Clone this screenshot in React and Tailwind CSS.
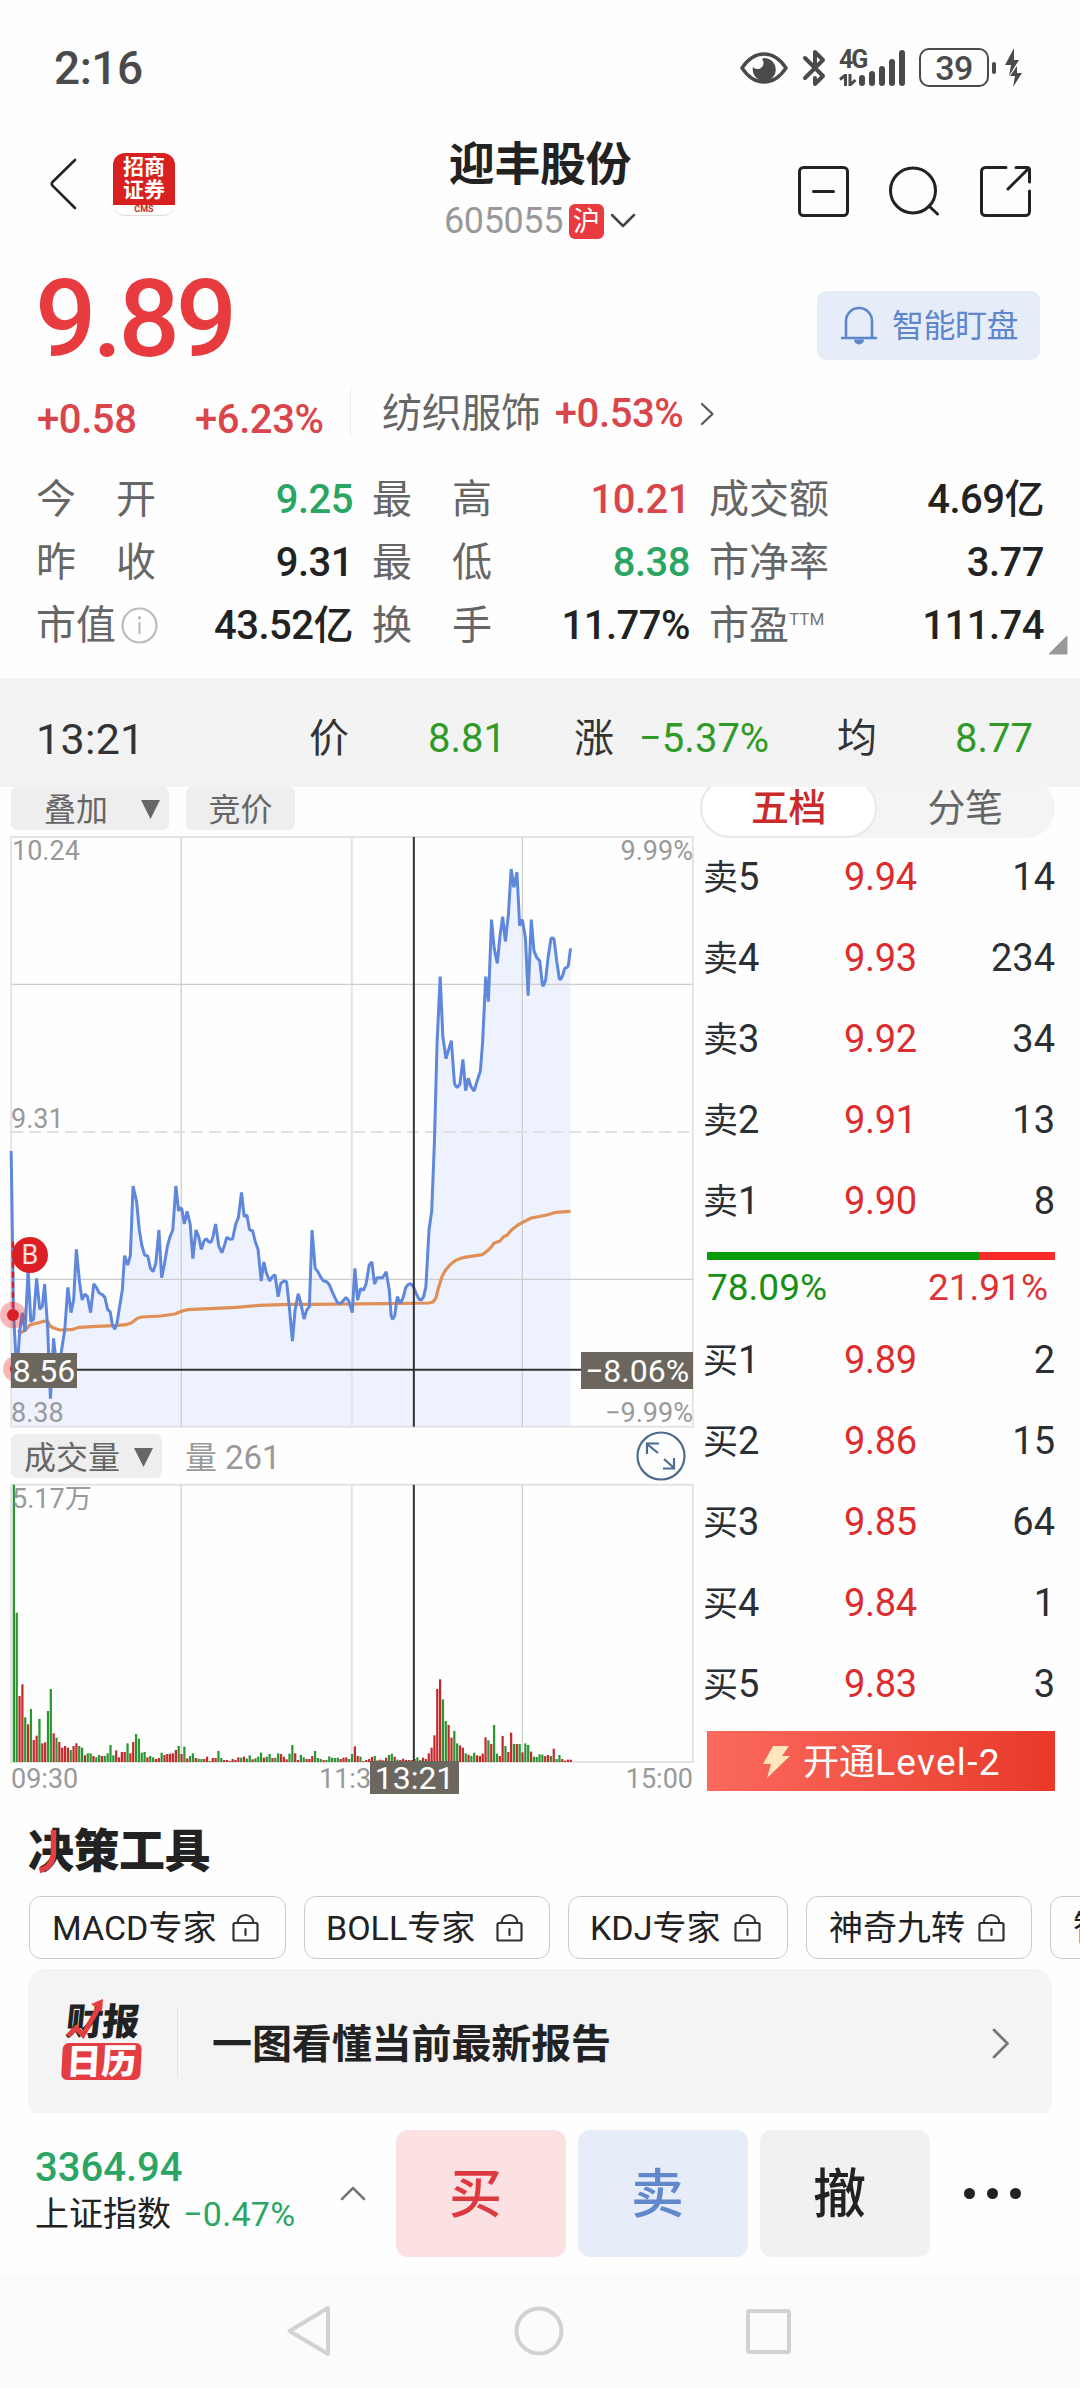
import React from "react";

const PRICE = [
  [25,123],[28,395],[30,600],[35,728],[38,740],[41,728],[44,665],[50,608],[56,665],[63,480],[69,635],[75,628],[82,505],[89,598],[95,588],[100,522],[107,660],[109,735],[113,866],[117,760],[120,685],[124,735],[130,760],[137,728],[145,660],[152,532],[159,608],[165,570],[171,418],[178,515],[184,570],[190,552],[196,560],[203,608],[210,522],[216,532],[222,549],[229,554],[235,562],[241,598],[247,606],[251,640],[257,658],[262,640],[267,598],[274,540],[279,437],[286,465],[292,437],[298,228],[306,275],[312,360],[318,408],[324,435],[331,438],[337,475],[343,485],[349,460],[356,360],[362,503],[368,465],[375,408],[381,380],[387,360],[394,228],[400,303],[402,294],[407,296],[413,342],[419,304],[426,342],[432,446],[439,360],[445,380],[451,418],[457,393],[462,386],[468,396],[473,396],[477,380],[483,342],[490,408],[497,428],[503,405],[508,382],[515,388],[521,387],[528,342],[534,323],[541,247],[547,320],[553,315],[559,359],[566,363],[572,396],[578,418],[585,513],[591,456],[597,490],[604,513],[610,500],[616,494],[623,560],[629,520],[636,513],[642,515],[648,590],[655,693],[661,600],[668,551],[674,580],[681,627],[687,600],[693,590],[699,360],[706,475],[712,485],[719,503],[725,513],[732,515],[738,525],[744,545],[751,565],[757,580],[763,580],[769,572],[775,562],[781,572],[789,608],[795,475],[801,570],[808,535],[814,541],[820,522],[827,465],[833,456],[839,522],[845,503],[857,503],[865,485],[872,540],[876,615],[879,628],[884,618],[890,560],[897,580],[903,563],[909,532],[915,523],[920,521],[926,530],[932,550],[939,568],[944,570],[949,560],[954,530],[961,360],[967,303],[973,100],[975,0],[979,-200],[986,-400],[992,-220],[999,-154],[1005,-182],[1011,-208],[1018,-80],[1021,-72],[1024,-67],[1030,-77],[1037,-152],[1043,-58],[1049,-95],[1055,-70],[1062,-57],[1068,-84],[1076,-117],[1081,-202],[1088,-400],[1094,-325],[1101,-571],[1107,-485],[1114,-440],[1120,-522],[1126,-580],[1132,-505],[1139,-590],[1145,-723],[1151,-668],[1158,-713],[1164,-553],[1170,-571],[1177,-515],[1183,-343],[1190,-571],[1196,-478],[1202,-458],[1209,-447],[1215,-375],[1217,-372],[1222,-388],[1228,-460],[1234,-513],[1237,-517],[1241,-513],[1247,-448],[1253,-393],[1256,-392],[1260,-402],[1265,-425],[1270,-428],[1273,-433],[1278,-485],
];

const AVERAGE = [
  [41,660],[45,669],[52,664],[60,655],[67,645],[75,642],[88,638],[97,634],[107,634],[112,648],[120,654],[134,660],[160,659],[178,652],[215,649],[260,647],[282,644],[295,638],[308,625],[318,621],[360,618],[392,612],[406,604],[420,599],[470,596],[530,592],[580,586],[650,583],[700,583],[860,581],[960,579],[970,576],[976,565],[983,530],[990,500],[998,480],[1010,462],[1022,450],[1040,442],[1080,434],[1092,422],[1100,412],[1106,400],[1120,393],[1128,380],[1136,376],[1145,361],[1160,345],[1175,334],[1190,324],[1225,315],[1245,307],[1278,304],
];

// One entry per minute; negative values are minutes that closed lower.
const VOLUME = [
  -832,-448,198,233,-134,113,-159,66,79,-129,56,59,-153,-219,86,-73,60,43,48,43,-36,48,56,-48,-43,20,-26,-26,18,-14,-21,18,-18,-26,-51,-20,35,14,30,30,-56,26,60,-84,-70,-28,-30,14,-18,-14,9,12,-28,21,24,25,26,36,-48,24,-46,11,-18,-26,12,-10,-9,9,16,-3,12,12,-33,-12,6,6,3,9,6,14,-13,16,-10,-20,8,-11,-16,-28,13,-16,-24,12,-13,-26,24,16,8,-25,-51,26,6,-21,-14,9,9,18,-33,-12,-9,6,-6,-17,-13,-12,-13,9,13,14,-9,-24,47,18,-16,3,6,9,15,-18,5,7,5,13,-21,-25,16,-7,6,10,6,6,6,9,-14,-6,13,9,26,43,80,219,248,-188,-123,111,73,-93,-56,50,43,-26,22,-18,-28,20,18,25,74,-65,54,-111,-25,18,78,-48,30,88,-54,54,-54,29,-56,-51,31,-16,-15,-23,-22,18,21,-18,40,-9,-21,9,4,7,7,
];

const toPath = (pts) => pts.map(([x, y], i) => `${i ? "L" : "M"}${x} ${y}`).join("");

function StatusBar() {
  return (
    <div className="flex h-[135px] items-center pl-[54px] text-[#4a4a4a]">
      <span className="w-[686px] text-[46px] leading-none font-medium tracking-[-0.5px]">2:16</span>
      <svg width="48" height="34" viewBox="0 0 48 34" fill="none">
        <path d="M2 17C8 8 16 3 24 3s16 5 22 14c-6 9-14 14-22 14S8 26 2 17z" stroke="#4a4a4a" strokeWidth="3.4" strokeLinejoin="round" />
        <path d="M24 7a11.500 11.500 0 1 1-11 9 6 6 0 1 0 9-8z" fill="#4a4a4a" />
      </svg>
      <svg className="ml-[14px]" width="24" height="38" viewBox="0 0 24 38" fill="none" stroke="#4a4a4a" strokeWidth="4" strokeLinejoin="round" strokeLinecap="round">
        <path d="M3 9l9 9M3 29l18-18-8-8v13M13 29v6l8-8-6-6" />
      </svg>
      <div className="ml-[13px] flex h-[38px] w-[67px] items-end">
        <div className="flex h-full w-[20px] flex-col">
          <span className="h-[25px] text-[25px] leading-[22px] font-bold tracking-[-2px]">4G</span>
          <svg width="18" height="12" viewBox="0 0 18 12" fill="none" stroke="#4a4a4a" strokeWidth="3">
            <path d="M6.500 12V1L1 5.500M11 0v11l5.500-5" />
          </svg>
        </div>
        <div className="flex items-end gap-[4px] pb-[1px]">
          <i className="h-[11px] w-[6px] rounded-full bg-[#4a4a4a]" />
          <i className="h-[15px] w-[6px] rounded-full bg-[#4a4a4a]" />
          <i className="h-[20px] w-[6px] rounded-full bg-[#4a4a4a]" />
          <i className="h-[27px] w-[6px] rounded-full bg-[#4a4a4a]" />
          <i className="h-[36px] w-[6px] rounded-full bg-[#4a4a4a]" />
        </div>
      </div>
      <div className="ml-[13px] flex h-[39px] w-[70px] shrink-0 items-center justify-center rounded-[10px] border-[2.500px] border-[#4a4a4a] text-[34px] leading-none font-medium tracking-[-0.5px]">39</div>
      <i className="ml-[3px] h-[12px] w-[4px] rounded-full bg-[#4a4a4a]" />
      <svg className="ml-[9px]" width="17" height="39" viewBox="0 0 17 39" fill="#4a4a4a">
        <path d="M9 0v12h5L4 28l2-11H0zM12 18v7h5l-9 14 2-11H5z" />
      </svg>
    </div>
  );
}

function Header() {
  return (
    <div className="flex h-[110px] items-start">
      <svg className="mt-[23px] ml-[49px]" width="28" height="52" viewBox="0 0 28 52" fill="none" stroke="#222" strokeWidth="2.600" strokeLinecap="round" strokeLinejoin="round">
        <path d="M26 2L3.500 24q-1.500 1.800 0 3.600L26 50" />
      </svg>
      <div className="mt-[18px] ml-[36px] flex h-[63px] w-[62px] flex-col overflow-hidden rounded-[12px] border-b border-[#ddd] bg-white">
        <div className="flex h-[52px] shrink-0 flex-col items-center justify-center bg-[#d92020] text-[21px] leading-[23px] font-bold text-white">
          <span>招商</span>
          <span>证券</span>
        </div>
        <span className="text-center text-[9px] leading-[9px] font-bold text-[#c8282a]">CMS</span>
      </div>
      <div className="flex w-[730px] shrink-0 flex-col items-center">
        <h1 className="mt-[5px] text-[46px] leading-[48px] font-bold tracking-[-0.4px] text-[#222]">迎丰股份</h1>
        <div className="mt-[15px] flex h-[36px] items-center">
          <span className="text-[36px] leading-none tracking-[-0.4px] text-[#999]">605055</span>
          <span className="ml-[6px] flex h-[35px] w-[35px] items-center justify-center rounded-[6px] bg-[#e93b3f] pt-[2px] text-[27px] leading-none text-white">沪</span>
          <svg className="ml-[6px]" width="26" height="16" viewBox="0 0 26 16" fill="none" stroke="#444" strokeWidth="2.500" strokeLinecap="round" strokeLinejoin="round">
            <path d="M2 2l11 11L24 2" />
          </svg>
        </div>
      </div>
      <div className="mt-[30px] -ml-[108px] flex gap-[38px]">
        <svg width="53" height="53" viewBox="0 0 53 53" fill="none" stroke="#222" strokeWidth="3" strokeLinecap="round">
          <rect x="2.500" y="2.500" width="48" height="48" rx="4" />
          <path d="M16.500 26.500h20" />
        </svg>
        <svg width="53" height="53" viewBox="0 0 53 53" fill="none" stroke="#222" strokeWidth="3" strokeLinecap="round">
          <circle cx="25" cy="25.500" r="22.500" />
          <path d="M41 41l8.500 8" />
        </svg>
        <svg width="53" height="53" viewBox="0 0 53 53" fill="none" stroke="#222" strokeWidth="3" strokeLinecap="round" strokeLinejoin="round">
          <path d="M27 2.500H6.500a4 4 0 0 0-4 4v40a4 4 0 0 0 4 4h40a4 4 0 0 0 4-4V26M37 2.500h11q2.500 0 2.500 2.500v12M49 4L29 24" />
        </svg>
      </div>
    </div>
  );
}

function Quote() {
  return (
    <>
      <div className="flex h-[147px] items-center justify-between pr-[40px] pl-[35px]">
        <span className="text-[108px] leading-none font-medium tracking-[-4px] text-[#e83b3f]">9.89</span>
        <button className="mt-[14px] flex h-[69px] w-[223px] items-center rounded-[9px] bg-[#e6edf8] pl-[23px] text-[#5d86cc]">
          <svg width="38" height="39" viewBox="0 0 38 39" fill="none" stroke="#5d86cc" strokeWidth="2.600" strokeLinecap="round">
            <path d="M2 32h34M6 32V15a13 13 0 0 1 26 0v17" />
            <path d="M14 33.500a5 5 0 0 0 10 0z" fill="#5d86cc" stroke="none" />
          </svg>
          <span className="ml-[14px] text-[32px] leading-none tracking-[-0.5px]">智能盯盘</span>
        </button>
      </div>
      <div className="flex h-[52px] items-center text-[40px] leading-none font-medium tracking-[-0.4px] text-[#d9454a]">
        <span className="mt-[3px] ml-[37px] w-[158px]">+0.58</span>
        <span className="mt-[3px] w-[155px]">+6.23%</span>
        <i className="mb-[14px] h-[51px] w-px bg-[#eee]" />
        <span className="mb-[9px] ml-[31px] font-normal tracking-[-0.3px] text-[#666]">纺织服饰</span>
        <span className="mb-[9px] ml-[14px]">+0.53%</span>
        <svg className="mb-[9px] ml-[17px]" width="15" height="24" viewBox="0 0 15 24" fill="none" stroke="#555" strokeWidth="2.200" strokeLinecap="round" strokeLinejoin="round">
          <path d="M2 2l10.500 10L2 22" />
        </svg>
      </div>
    </>
  );
}

const STATS = [
  [["今　开", "9.25", "text-[#2aa564]"], ["最　高", "10.21", "text-[#d9454a]"], ["成交额", "4.69亿", "text-[#222]"]],
  [["昨　收", "9.31", "text-[#222]"], ["最　低", "8.38", "text-[#2aa564]"], ["市净率", "3.77", "text-[#222]"]],
  [["市值", "43.52亿", "text-[#222]"], ["换　手", "11.77%", "text-[#222]"], ["市盈", "111.74", "text-[#222]"]],
];

function Stats() {
  return (
    <div className="mt-[24px] flex h-[210px] items-start pl-[36px]">
      <div className="grid w-[1008px] shrink-0 grid-cols-[317px_318px_335px] gap-x-[19px] text-[40px] leading-none">
        {STATS.flat().map(([label, value, tone]) => (
          <div key={label} className="flex h-[63px] items-center">
            <span className="text-[#666]">{label}</span>
            {label === "市值" && (
              <svg className="ml-[5px]" width="37" height="37" viewBox="0 0 37 37" fill="none" stroke="#bbb" strokeWidth="2.200" strokeLinecap="round">
                <circle cx="18.500" cy="18.500" r="17" />
                <path d="M18.500 16v10" />
                <path d="M18.500 10.500v.5" strokeWidth="3" />
              </svg>
            )}
            {label === "市盈" && <span className="mb-[13px] text-[17px] text-[#777]">TTM</span>}
            <span className={"ml-auto font-medium tracking-[-0.5px] " + tone}>{value}</span>
          </div>
        ))}
      </div>
      <svg className="mt-[167px] ml-[4px]" width="20" height="20" viewBox="0 0 20 20" fill="#999">
        <path d="M19 1v18H1z" stroke="#999" strokeLinejoin="round" />
      </svg>
    </div>
  );
}

function CursorBar() {
  return (
    <div className="flex h-[109px] items-center bg-[#f3f3f3] pt-[13px] text-[40px] leading-none text-[#333]">
      <span className="ml-[36px] w-[273px] text-[43px] tracking-[0.3px]">13:21</span>
      <span className="w-[119px]">价</span>
      <span className="w-[146px] text-[#2f9a27]">8.81</span>
      <span className="w-[65px]">涨</span>
      <span className="w-[198px] text-[#2f9a27]">−5.37%</span>
      <span className="w-[118px]">均</span>
      <span className="text-[#2f9a27]">8.77</span>
    </div>
  );
}

function Down({ className }) {
  return (
    <svg className={className} width="19" height="19" viewBox="0 0 19 19" fill="#666">
      <path d="M0 0h19L9.500 19z" />
    </svg>
  );
}

function PriceChart() {
  return (
    <div className="relative h-[604px] w-[700px] text-[27px] leading-none text-[#999]">
      <svg className="block" width="700" height="604" viewBox="0 -840 1568 1812" preserveAspectRatio="none" fill="none">
        <path d={toPath(PRICE) + "L1278 950L25 950Z"} fill="#edf2fe" />
        <path d="M25 -819H1552V950H25ZM788 -819V950" stroke="#e4e4e4" strokeWidth="2" vectorEffect="non-scaling-stroke" />
        <path d="M406 -819V950M1170 -819V950M25 -377H1552M25 508H1552" stroke="#ccc" strokeWidth="1.200" vectorEffect="non-scaling-stroke" />
        <path d="M25 66H1552" stroke="#e0e0e0" strokeWidth="2" strokeDasharray="12 6" vectorEffect="non-scaling-stroke" />
        <path d={toPath(AVERAGE)} stroke="#e08f56" strokeWidth="3.200" strokeLinejoin="round" vectorEffect="non-scaling-stroke" />
        <path d={toPath(PRICE)} stroke="#5f87dc" strokeWidth="3" strokeLinejoin="bevel" vectorEffect="non-scaling-stroke" />
        <path d="M29 395V600" stroke="#dc1f24" strokeWidth="2.500" strokeDasharray="6 4" vectorEffect="non-scaling-stroke" />
        <ellipse cx="29" cy="615" rx="29" ry="40" fill="#e8343a" fillOpacity=".35" />
        <ellipse cx="29" cy="615" rx="13.500" ry="18" fill="#dc1f24" />
        <ellipse cx="33" cy="777" rx="26" ry="38" fill="#e8343a" fillOpacity=".35" />
        <ellipse cx="33" cy="777" rx="11" ry="16" fill="#dc1f24" />
        <path d="M927 -819V950M25 779H1552" stroke="#333" strokeWidth="2" vectorEffect="non-scaling-stroke" />
      </svg>
      <span className="absolute top-[8px] left-[12px]">10.24</span>
      <span className="absolute top-[8px] right-[7px]">9.99%</span>
      <span className="absolute top-[276px] left-[11px]">9.31</span>
      <span className="absolute top-[570px] left-[11px]">8.38</span>
      <span className="absolute top-[570px] right-[7px]">−9.99%</span>
      <span className="absolute top-[407px] left-[12px] flex size-[36px] items-center justify-center rounded-full bg-[#dc1f24] text-[27px] text-[#fbe3e3]">B</span>
      <span className="absolute top-[523px] left-[11px] flex h-[35px] w-[66px] items-center justify-center bg-[#6b675f] text-[32px] text-white">8.56</span>
      <span className="absolute top-[522px] left-[581px] flex h-[37px] w-[112px] items-center justify-center bg-[#6b675f] text-[32px] text-white">−8.06%</span>
    </div>
  );
}

function VolumeChart() {
  return (
    <div className="relative h-[292px] w-[700px] text-[27px] leading-none text-[#999]">
      <svg className="block" width="700" height="292" viewBox="0 84 1568 876" preserveAspectRatio="none" fill="none">
        <path d="M25 104H1552V936H25ZM788 104V936" stroke="#e4e4e4" strokeWidth="2" vectorEffect="non-scaling-stroke" />
        <path d="M406 104V936M1170 104V936" stroke="#ccc" strokeWidth="1.200" vectorEffect="non-scaling-stroke" />
        {VOLUME.map((v, i) => (
          <rect key={i} x={28.6 + i * 6.365} y={936 - Math.abs(v)} width="5" height={Math.abs(v)} fill={v > 0 ? "#c22a2c" : "#2a9632"} />
        ))}
        <path d="M927 104V936" stroke="#333" strokeWidth="2" vectorEffect="non-scaling-stroke" />
      </svg>
      <span className="absolute top-[8px] left-[12px]">5.17万</span>
      <span className="absolute top-[288px] left-[11px]">09:30</span>
      <span className="absolute top-[288px] left-[319px]">11:3</span>
      <span className="absolute top-[288px] right-[7px]">15:00</span>
      <span className="absolute top-[283px] left-[370px] flex h-[33px] w-[89px] items-center justify-center bg-[#6b675f] pt-px text-[32px] text-white">13:21</span>
    </div>
  );
}

function Charts() {
  return (
    <div className="w-[700px] shrink-0">
      <div className="flex h-[43px] pl-[11px] text-[32px] leading-none text-[#666]">
        <div className="flex w-[158px] items-center rounded-[6px] bg-[#eee] pt-[2px] pl-[33px]">
          叠加
          <Down className="mb-[1px] ml-[33px]" />
        </div>
        <div className="ml-[17px] flex w-[109px] items-center justify-center rounded-[6px] bg-[#eee] pt-[2px]">竞价</div>
      </div>
      <PriceChart />
      <div className="flex h-[44px] items-center pl-[11px] text-[32px] leading-none">
        <div className="flex h-full w-[151px] items-center rounded-[6px] bg-[#eee] pt-[3px] pl-[13px] text-[#666]">
          成交量
          <Down className="ml-[14px] -mt-[1px]" />
        </div>
        <span className="mt-[3px] ml-[23px] text-[#999]">量 <span className="text-[33px]">261</span></span>
        <svg className="ml-auto mr-[14px] -my-1 shrink-0" width="50" height="50" viewBox="0 0 50 50" fill="none" stroke="#4a6d8f" strokeWidth="2.200">
          <circle cx="25" cy="25" r="23.500" />
          <path d="M22 22L11 13M11 23V12.500h12M28 28l10 9M38 27v10.500H27" />
        </svg>
      </div>
      <VolumeChart />
    </div>
  );
}

const SELLS = [["卖5", "9.94", 14], ["卖4", "9.93", 234], ["卖3", "9.92", 34], ["卖2", "9.91", 13], ["卖1", "9.90", 8]];
const BUYS = [["买1", "9.89", 2], ["买2", "9.86", 15], ["买3", "9.85", 64], ["买4", "9.84", 1], ["买5", "9.83", 3]];

function Levels({ rows }) {
  return rows.map(([label, price, qty]) => (
    <div key={label} className="flex flex-1 items-center pt-[2px] pr-[25px] pl-[3px] text-[38px] leading-none text-[#2b2f33]">
      <span className="w-[141px]"><span className="text-[35px]">{label[0]}</span>{label[1]}</span>
      <span className="tracking-[-0.3px] text-[#dc2c2e]">{price}</span>
      <span className="ml-auto">{qty}</span>
    </div>
  ));
}

function OrderBook() {
  return (
    <div className="flex w-[380px] flex-col">
      <div className="h-[51px] w-[355px] shrink-0 overflow-hidden">
        <div className="-mt-[9px] flex h-[60px] rounded-full bg-[#f4f4f4] text-[38px] leading-none">
          <span className="flex w-[177px] items-center justify-center rounded-full border-2 border-[#e8e8e8] bg-white font-medium tracking-[-0.5px] text-[#c92a2a]">五档</span>
          <span className="flex flex-1 items-center justify-center pr-[2px] tracking-[-0.5px] text-[#666]">分笔</span>
        </div>
      </div>
      <div className="-mt-[2px] flex h-[404px] flex-col"><Levels rows={SELLS} /></div>
      <div className="mt-[12px] ml-[7px] flex h-[8px] w-[348px]">
        <i className="w-[78.090%] bg-[#089b08]" />
        <i className="flex-1 bg-[#fb2b2b]" />
      </div>
      <div className="flex h-[53px] items-center justify-between pt-[2px] pr-[32px] pl-[7px] text-[37px] leading-none">
        <span className="text-[#179017]">78.09%</span>
        <span className="text-[#dc3436]">21.91%</span>
      </div>
      <div className="mt-[6px] flex h-[404px] flex-col"><Levels rows={BUYS} /></div>
      <button className="mt-[8px] ml-[7px] flex h-[60px] w-[348px] items-center bg-gradient-to-r from-[#fb695d] to-[#e83828] pt-[2px] pl-[56px] text-[36px] leading-none text-white">
        <svg width="27" height="32" viewBox="0 0 27 32" fill="#ffe6be">
          <path d="M10 0h16l-7 10h8L4 32l4-14H0z" />
        </svg>
        <span className="ml-[13px] whitespace-nowrap">开通<span className="text-[37px] tracking-[1.3px]">Level-2</span></span>
      </button>
    </div>
  );
}

function Lock() {
  return (
    <svg width="27" height="29" viewBox="0 0 27 29" fill="none" stroke="#333" strokeWidth="2.200" strokeLinecap="round">
      <rect x="1.500" y="10" width="24" height="17.500" rx="1.500" />
      <path d="M5.500 10a8 8 0 0 1 16 0M13.500 16v6" />
    </svg>
  );
}

function Tools() {
  return (
    <>
      <div className="flex h-[86px] items-center pb-[5px] pl-[28px]">
        <h2 className="relative text-[46px] leading-none font-black tracking-[-0.5px] text-[#222]">
          决策工具
          <svg className="absolute top-0 left-[9px]" width="20" height="46" viewBox="0 0 20 46" fill="none" stroke="#e43d42" strokeWidth="5.500">
            <path d="M16.500 2v22q0 15-14 18.500" />
          </svg>
        </h2>
      </div>
      <div className="flex h-[63px] gap-[18px] overflow-hidden pl-[29px] text-[34px] leading-none text-[#222]">
        <div className="flex w-[257px] shrink-0 items-center justify-between rounded-[12px] border border-[#ccc] pr-[26px] pl-[22px]">MACD专家<Lock /></div>
        <div className="flex w-[246px] shrink-0 items-center justify-between rounded-[12px] border border-[#ccc] pr-[26px] pl-[21px]">BOLL专家<Lock /></div>
        <div className="flex w-[220px] shrink-0 items-center justify-between rounded-[12px] border border-[#ccc] pr-[26px] pl-[21px]">KDJ专家<Lock /></div>
        <div className="flex w-[226px] shrink-0 items-center justify-between rounded-[12px] border border-[#ccc] pr-[26px] pl-[22px]">神奇九转<Lock /></div>
        <div className="flex w-[226px] shrink-0 items-center justify-between rounded-[12px] border border-[#ccc] pr-[26px] pl-[22px]">智能选股<Lock /></div>
      </div>
      <div className="mx-[28px] mt-[10px] h-[144px] overflow-hidden">
        <div className="flex h-[150px] items-center rounded-[18px] bg-[#f4f4f4] pb-[2px] pl-[34px]">
          <div className="relative w-[81px] shrink-0 font-black">
            <div className="-skew-x-6 pl-[4px] text-[37px] leading-[34px] tracking-[-0.5px] text-[#222]">财报</div>
            <svg className="absolute -top-[7px] left-[4px]" width="40" height="40" viewBox="0 0 40 40" fill="none" stroke="#e43d42" strokeWidth="5">
              <path d="M2 37l8-8 7 7L33 8" />
              <path d="M25 5l12-5-1 13z" fill="#e43d42" stroke="none" />
            </svg>
            <div className="mt-[3px] flex h-[37px] w-[79px] -skew-x-3 items-center justify-center rounded-[6px] bg-[#e43d42] pt-[2px] text-[35px] leading-none text-white">日历</div>
          </div>
          <i className="ml-[34px] h-[69px] w-px bg-[#e2e2e2]" />
          <span className="mt-[4px] ml-[34px] text-[40px] leading-none font-bold tracking-[-0.1px] text-[#222]">一图看懂当前最新报告</span>
          <svg className="mr-[42px] ml-auto" width="18" height="31" viewBox="0 0 18 31" fill="none" stroke="#777" strokeWidth="2.800" strokeLinecap="round" strokeLinejoin="round">
            <path d="M2 2l13.500 13.500L2 29" />
          </svg>
        </div>
      </div>
    </>
  );
}

function TradeBar() {
  return (
    <div className="flex h-[161px] items-center pl-[35px]">
      <div className="flex w-[305px] shrink-0 flex-col pb-[8px]">
        <span className="text-[40px] leading-none font-medium text-[#2aa564]">3364.94</span>
        <span className="mt-[9px] flex text-[34px] leading-none text-[#222]">上证指数<span className="ml-[12px] tracking-[0.3px] text-[#2aa564]">−0.47%</span></span>
      </div>
      <svg width="26" height="15" viewBox="0 0 26 15" fill="none" stroke="#777" strokeWidth="2.500" strokeLinecap="round" strokeLinejoin="round">
        <path d="M2 13L13 2l11 11" />
      </svg>
      <div className="ml-[30px] flex gap-[12px] text-[53px] leading-none font-medium">
        <button className="h-[127px] w-[170px] rounded-[12px] bg-[#fce1e3] pt-[4px] pr-[11px] text-[#dd3a40]">买</button>
        <button className="h-[127px] w-[170px] rounded-[12px] bg-[#e6edf8] pt-[4px] pr-[11px] text-[#6288cc]">卖</button>
        <button className="h-[127px] w-[170px] rounded-[12px] bg-[#f1f1f1] pt-[4px] pr-[11px] text-[#222]">撤</button>
      </div>
      <div className="ml-[34px] flex gap-[12px]">
        <i className="size-[11px] rounded-full bg-[#222]" />
        <i className="size-[11px] rounded-full bg-[#222]" />
        <i className="size-[11px] rounded-full bg-[#222]" />
      </div>
    </div>
  );
}

function NavBar() {
  return (
    <div className="flex h-[114px] items-center justify-between bg-[#fbfbfb] pr-[288px] pl-[286px]">
      <svg width="46" height="52" viewBox="0 0 46 52" fill="none" stroke="#d2d2d2" strokeWidth="4" strokeLinejoin="round">
        <path d="M42 3v46L3.500 26z" />
      </svg>
      <svg width="50" height="50" viewBox="0 0 50 50" fill="none" stroke="#d2d2d2" strokeWidth="4">
        <circle cx="25" cy="25" r="22.500" />
      </svg>
      <svg width="47" height="47" viewBox="0 0 47 47" fill="none" stroke="#d2d2d2" strokeWidth="4">
        <rect x="3" y="3" width="41" height="41" rx="1.500" />
      </svg>
    </div>
  );
}

export default function App() {
  return (
    <div className="h-[2388px] w-[1080px] overflow-hidden bg-[#fefefe] font-[Roboto,'Noto_Sans_CJK_SC',sans-serif]">
      <StatusBar />
      <Header />
      <Quote />
      <Stats />
      <CursorBar />
      <div className="flex h-[1023px]">
        <Charts />
        <OrderBook />
      </div>
      <Tools />
      <TradeBar />
      <NavBar />
    </div>
  );
}
